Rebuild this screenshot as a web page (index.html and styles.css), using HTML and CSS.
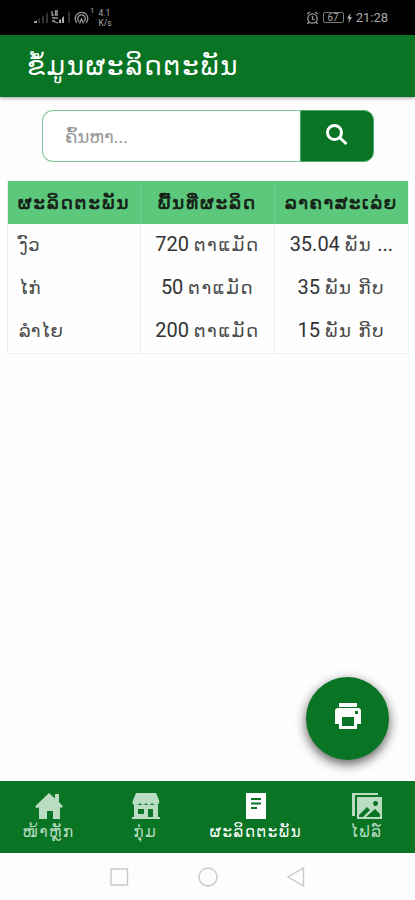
FILE: index.html
```html
<!DOCTYPE html>
<html lang="lo">
<head>
    <meta charset="UTF-8">
    <meta name="viewport" content="width=device-width, initial-scale=1.0">
    <title>ຂໍ້ມູນຜະລິດຕະພັນ</title>
    <link rel="stylesheet" href="styles.css">
</head>
<body>

    <!-- Status bar -->
    <div class="status">
        <svg class="signal" width="15" height="13" viewBox="0 0 15 13">
            <path class="on" d="M0 12V10.500L3 9.500V12z"/>
            <path class="off" d="M4 12V8l2-1v5zM8 12V6l2-2v8zM12 12V3l2-2v11z"/>
        </svg>
        <svg class="signal second" width="20" height="15" viewBox="0 0 20 15">
            <path class="line" d="M1 1v4h2M7 1H4.500v4H7M4.500 3H7M1 8h6M4 11H1l6 2"/>
            <path class="on" d="M8 13v-3l2-1v4zM11 13V8l2-2v7z"/>
            <path class="off" d="M17 13V2l2-1v12z"/>
        </svg>
        <svg class="hotspot" width="15" height="14" viewBox="0 0 15 14">
            <path d="M3 12a6.300 6.300 0 1 1 9 0M5 10.500a3.800 3.800 0 1 1 5 0M7.500 7v1M5.500 12.500L7.500 8l2 4.500"/>
        </svg>
        <span class="devices">1</span>
        <span class="speed">4.1<br>K/s</span>
        <div class="status-right">
            <svg class="alarm" width="13" height="14" viewBox="0 0 13 14">
                <path d="M1 3l3-2M12 3L9 1M3 11l-1.500 2M10 11l1.500 2M6.500 5v3l2 1"/>
                <circle cx="6.500" cy="7.500" r="4.700"/>
            </svg>
            <span class="battery">67</span>
            <svg class="bolt" width="5" height="10" viewBox="0 0 5 10">
                <path d="M3.500 0L0 5.500h2L1.500 10 5 4H3z"/>
            </svg>
            <span class="clock">21:28</span>
        </div>
    </div>

    <header class="header">
        <h1>ຂໍ້ມູນຜະລິດຕະພັນ</h1>
    </header>

    <main class="content">
        <form class="search">
            <input type="text" placeholder="ຄົ້ນຫາ...">
            <button type="button" aria-label="ຄົ້ນຫາ">
                <svg width="24" height="24" viewBox="0 0 24 24">
                    <circle cx="9.500" cy="9.500" r="7"/>
                    <path d="M14.500 14.500l7 6.500"/>
                </svg>
            </button>
        </form>

        <table class="products">
            <thead>
                <tr>
                    <th>ຜະລິດຕະພັນ</th>
                    <th>ພື້ນທີ່ຜະລິດ</th>
                    <th class="price">ລາຄາສະເລ່ຍ</th>
                </tr>
            </thead>
            <tbody>
                <tr>
                    <td><span>ງົວ</span></td>
                    <td>720 <span>ຕາແມັດ</span></td>
                    <td>35.04 <span>ພັນ</span> ...</td>
                </tr>
                <tr>
                    <td><span>ໄກ່</span></td>
                    <td>50 <span>ຕາແມັດ</span></td>
                    <td>35 <span>ພັນ ກີບ</span></td>
                </tr>
                <tr>
                    <td><span>ລຳໄຍ</span></td>
                    <td>200 <span>ຕາແມັດ</span></td>
                    <td>15 <span>ພັນ ກີບ</span></td>
                </tr>
            </tbody>
        </table>
    </main>

    <!-- Print button -->
    <button class="print" type="button" aria-label="Print">
        <svg width="28" height="28" viewBox="0 0 28 28">
            <path d="M5 1h18v4H5z"/>
            <path fill-rule="evenodd" d="M4 6h20q3 0 3 3v13h-4v5H5v-5H1V9q0-3 3-3zM8 15v9h12v-9zM21 9v3h3V9z"/>
        </svg>
    </button>

    <nav class="tabs">
        <a class="tab" href="#">
            <svg width="28" height="26" viewBox="0 0 28 26">
                <path d="M14 0l6 5.500V1h4v8l4 4.500-2 1.500-1-1v12h-7v-8h-6v8H4V14l-2 1.500-2-2z"/>
            </svg>
            <span>ໜ້າຫຼັກ</span>
        </a>
        <a class="tab" href="#">
            <svg width="28" height="26" viewBox="0 0 28 26">
                <path d="M4 0h20l3 7q1 5-3 5-3 0-4-2-1 2-3 2t-3-2q-1 2-3 2t-3-2q-1 2-4 2-5 0-3-5z"/>
                <path fill-rule="evenodd" d="M2 12h24v12h2v2H0v-2h2zM6 16v5h6v-5zM16 16v8h5v-8z"/>
            </svg>
            <span>ກຸ່ມ</span>
        </a>
        <a class="tab active" href="#">
            <svg width="28" height="26" viewBox="0 0 28 26">
                <path fill-rule="evenodd" d="M4 0h20v26H4zM9 5v2h10V5zM9 9.500v2h10v-2zM9 14v2h6v-2z"/>
            </svg>
            <span>ຜະລິດຕະພັນ</span>
        </a>
        <a class="tab" href="#">
            <svg width="30" height="26" viewBox="0 0 30 26">
                <path d="M0 0h26v2H3v21H0z"/>
                <path fill-rule="evenodd" d="M5 4h25v22H5zM7 24h4l7-7-3-3-8 8zM14 24h14v-3l-5-5zM23.500 8a2.500 2.500 0 1 0 .1 0z"/>
            </svg>
            <span>ໄຟລ໌</span>
        </a>
    </nav>

    <!-- System navigation -->
    <div class="system">
        <svg width="20" height="20" viewBox="0 0 20 20"><path d="M2 2h16.500v16H2z"/></svg>
        <svg width="20" height="20" viewBox="0 0 20 20"><circle cx="10" cy="10" r="9"/></svg>
        <svg width="20" height="20" viewBox="0 0 20 20"><path d="M16.500 1v18L1 10z"/></svg>
    </div>

</body>
</html>
```
FILE: styles.css
```css
* {
    margin: 0;
    padding: 0;
    box-sizing: border-box;
}

body {
    width: 415px;
    height: 900px;
    display: flex;
    flex-direction: column;
    position: relative;
    overflow: hidden;
    background: #fefefe;
    color: #333;
    font-family: Roboto, "DejaVu Sans", sans-serif;
}

/* Status bar */
.status {
    height: 35px;
    display: flex;
    align-items: center;
    padding: 0 27px 0 34px;
    background: #000;
    color: #aaa;
}

.signal .on {
    fill: #aaa;
}

.signal .off {
    fill: #333;
}

.signal .line,
.hotspot,
.alarm {
    fill: none;
    stroke: #999;
    stroke-width: 1.3;
}

.second {
    margin-left: 2px;
}

.hotspot {
    margin-left: 3px;
}

.devices {
    margin: -14px 0 0 1px;
    font-size: 8px;
}

.speed {
    margin-left: 4px;
    font-size: 8.5px;
    line-height: 10px;
}

.status-right {
    display: flex;
    align-items: center;
    margin-left: auto;
}

.battery {
    width: 21px;
    height: 11px;
    margin-left: 4px;
    border: 1px solid #777;
    border-radius: 2px;
    font-size: 10px;
    line-height: 9px;
    text-align: center;
}

.bolt {
    margin: 0 4px 0 3px;
    fill: #aaa;
}

.clock {
    font-size: 13px;
}

/* Header */
.header {
    height: 62px;
    padding-left: 27px;
    background: #087424;
    box-shadow: 0 1px 4px rgba(0, 0, 0, 0.4);
}

.header h1 {
    color: #fff;
    font-size: 26px;
    font-weight: normal;
    line-height: 62px;
    letter-spacing: 1.9px;
    white-space: nowrap;
}

.content {
    flex: 1;
    padding: 13px 6px 0 7px;
}

/* Search */
.search {
    display: flex;
    width: 332px;
    height: 52px;
    margin-left: 35px;
}

.search input {
    width: 258px;
    padding-left: 22px;
    border: 1px solid #82c69b;
    border-right: none;
    border-radius: 11px 0 0 11px;
    background: #fff;
    font-family: inherit;
    font-size: 18px;
}

.search input::placeholder {
    color: #999;
}

.search button {
    flex: 1;
    border: 1px solid #4fae6c;
    border-radius: 0 10px 10px 0;
    background: #087424;
}

.search svg {
    fill: none;
    stroke: #fff;
    stroke-width: 3;
    display: block;
    margin: -3px auto 0;
}

/* Product table */
.products {
    width: 402px;
    margin-top: 19px;
    table-layout: fixed;
    border-collapse: separate;
    border-spacing: 0;
    border: 1px solid #eee;
    border-top: none;
    font-size: 20px;
}

.products th {
    height: 43px;
    background: #5cc87b;
    color: #151d17;
    font-size: 18px;
    font-weight: normal;
    letter-spacing: 2.1px;
    -webkit-text-stroke: 0.7px #151d17;
    white-space: nowrap;
    border-right: 1px solid #72cf8d;
}

.products .price {
    letter-spacing: 1.6px;
}

.products td {
    height: 43px;
    padding-bottom: 3px;
    text-align: center;
    white-space: nowrap;
    border-right: 1px solid #eee;
}

.products th:last-child,
.products td:last-child {
    border-right: none;
}

.products td:first-child {
    padding-left: 11px;
    text-align: left;
}

.products td span {
    color: #4a4a4a;
    font-size: 18px;
    letter-spacing: 1.6px;
}

.products td:first-child span {
    letter-spacing: 0.6px;
}

/* Print button, floats over the page */
.print {
    position: absolute;
    right: 26px;
    bottom: 140px;
    width: 83px;
    height: 83px;
    border: none;
    border-radius: 50%;
    background: #087424;
    box-shadow: 0 4px 12px rgba(0, 0, 0, 0.65);
}

.print svg {
    fill: #fff;
    display: block;
    margin: -6px auto 0;
}

/* Bottom tabs */
.tabs {
    height: 72px;
    display: grid;
    grid-template-columns: 97px 97px 124px 97px;
    background: #087424;
}

.tab {
    display: flex;
    flex-direction: column;
    align-items: center;
    padding-top: 12px;
    color: #b9dcc2;
    font-size: 15px;
    letter-spacing: 1.6px;
    text-decoration: none;
    white-space: nowrap;
}

.tab svg {
    fill: currentColor;
}

.tab span {
    line-height: 26px;
}

.active {
    color: #fff;
}

/* System navigation */
.system {
    height: 47px;
    display: flex;
    align-items: center;
    justify-content: center;
    gap: 69px;
    background: #fdfdfd;
}

.system svg {
    fill: none;
    stroke: #c9c9c9;
    stroke-width: 1.4;
}
```
